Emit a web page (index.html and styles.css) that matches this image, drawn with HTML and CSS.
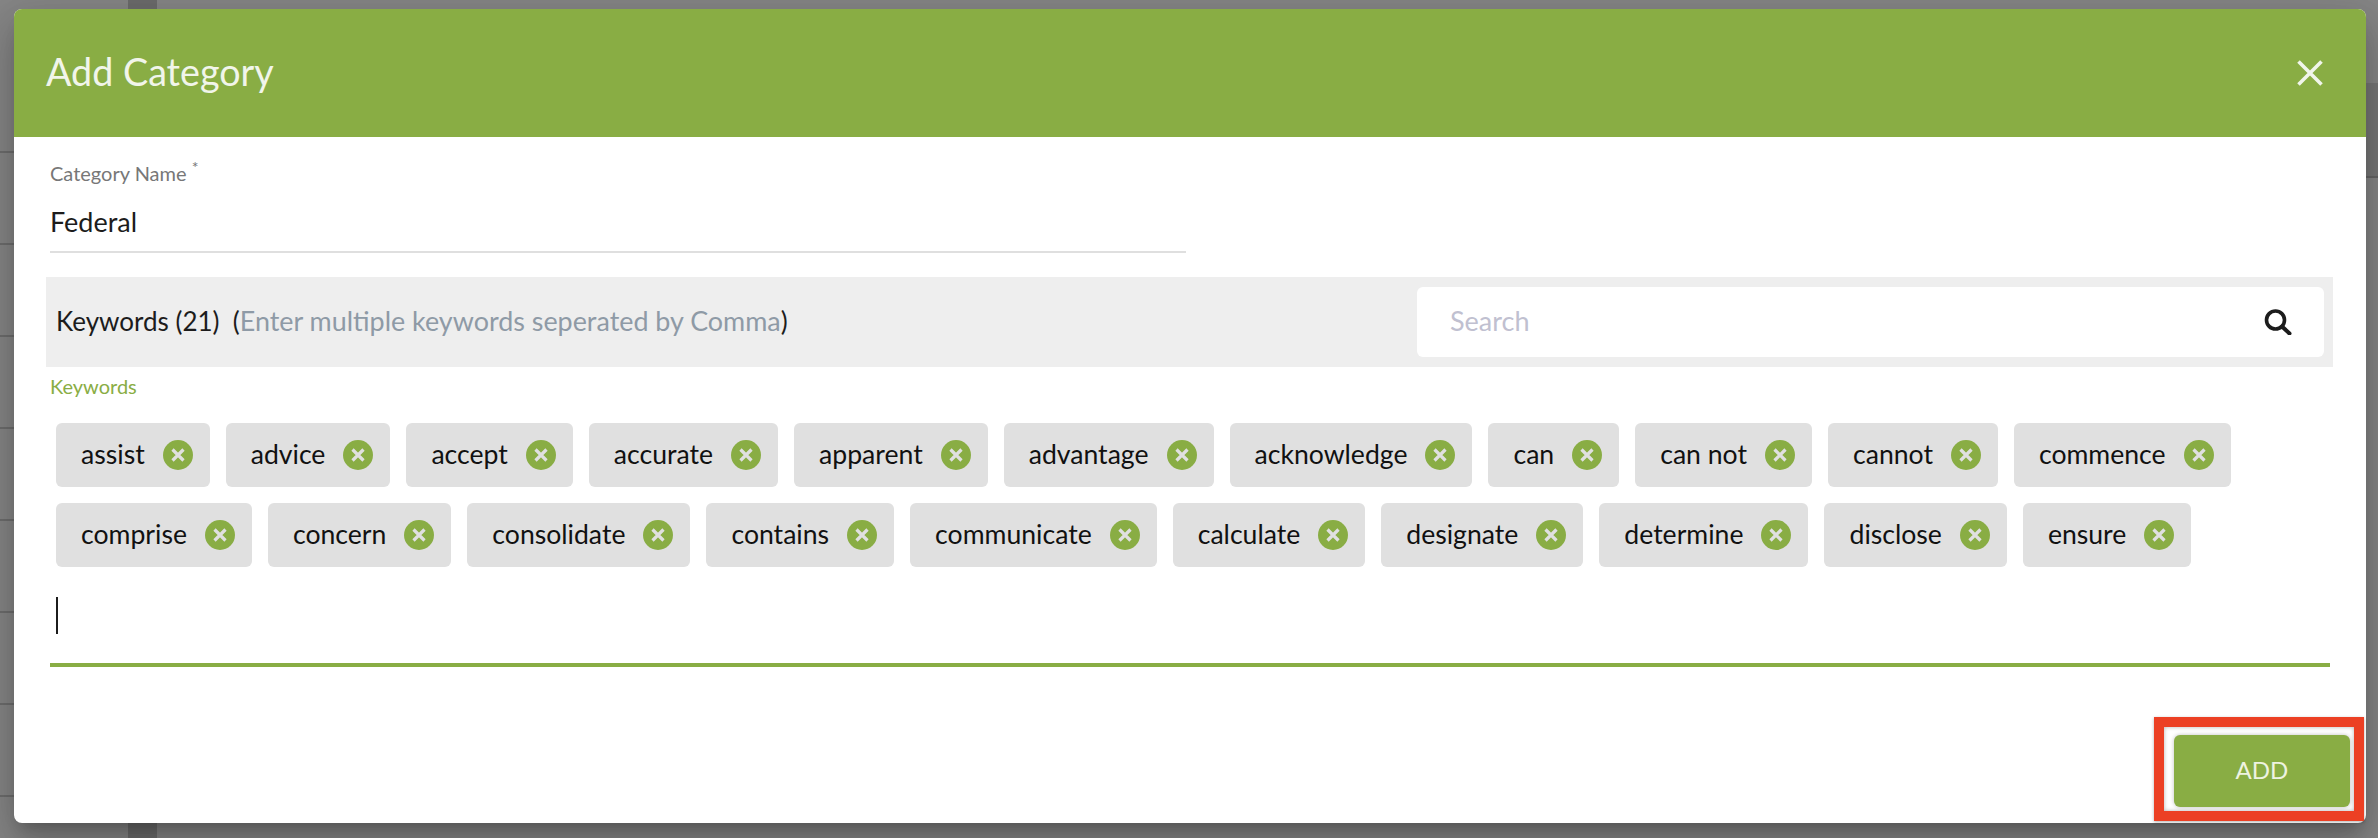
FILE: index.html
```html
<!doctype html>
<html lang="en">
<head>
    <meta charset="UTF-8">
    <meta content="width=device-width, initial-scale=1" name="viewport">
    <title>Add Category</title>
    <link rel="stylesheet" href="styles.css">
</head>
<body>
<div class="page">
    <div class="page-rows">
        <div class="page-row"></div>
        <div class="page-row"></div>
        <div class="page-row"></div>
        <div class="page-row"></div>
        <div class="page-row"></div>
        <div class="page-row"></div>
        <div class="page-row"></div>
        <div class="page-row"></div>
    </div>
    <div class="page-rail"></div>
    <div class="page-main">
        <div class="page-band"></div>
    </div>
</div>

<div class="modal">
    <div class="modal-header">
        <h2 class="modal-title">Add Category</h2>
        <svg class="modal-close" viewBox="0 0 28 28" width="28" height="28">
            <path d="M2.5 2.5L25.5 25.5M25.5 2.5L2.5 25.5" fill="none" stroke="#f1f5ea" stroke-width="3.6"/>
        </svg>
    </div>

    <div class="modal-body">
        <div class="field">
            <label class="field-label">Category Name <sup class="field-star">*</sup></label>
            <div class="field-value">Federal</div>
        </div>

        <div class="keyword-bar">
            <div class="keyword-title">Keywords (21) &nbsp;(<span class="keyword-hint">Enter multiple keywords seperated by Comma</span>)</div>
            <div class="search-box">
                <span class="search-placeholder">Search</span>
                <svg class="search-icon" viewBox="0 0 28 26" width="28" height="26">
                    <circle cx="11.5" cy="11" r="9" fill="none" stroke="#1c1c1c" stroke-width="3.6"/>
                    <path d="M18 17.5L25.5 24.5" fill="none" stroke="#1c1c1c" stroke-width="4" stroke-linecap="round"/>
                </svg>
            </div>
        </div>

        <div class="keywords-label">Keywords</div>

        <div class="chips">
            <div class="chip"><span>assist</span><svg class="chip-x" viewBox="0 0 30 30"><circle cx="15" cy="15" r="15"/><path d="M9.5 9.5L20.5 20.5M20.5 9.5L9.5 20.5"/></svg></div>
            <div class="chip"><span>advice</span><svg class="chip-x" viewBox="0 0 30 30"><circle cx="15" cy="15" r="15"/><path d="M9.5 9.5L20.5 20.5M20.5 9.5L9.5 20.5"/></svg></div>
            <div class="chip"><span>accept</span><svg class="chip-x" viewBox="0 0 30 30"><circle cx="15" cy="15" r="15"/><path d="M9.5 9.5L20.5 20.5M20.5 9.5L9.5 20.5"/></svg></div>
            <div class="chip"><span>accurate</span><svg class="chip-x" viewBox="0 0 30 30"><circle cx="15" cy="15" r="15"/><path d="M9.5 9.5L20.5 20.5M20.5 9.5L9.5 20.5"/></svg></div>
            <div class="chip"><span>apparent</span><svg class="chip-x" viewBox="0 0 30 30"><circle cx="15" cy="15" r="15"/><path d="M9.5 9.5L20.5 20.5M20.5 9.5L9.5 20.5"/></svg></div>
            <div class="chip"><span>advantage</span><svg class="chip-x" viewBox="0 0 30 30"><circle cx="15" cy="15" r="15"/><path d="M9.5 9.5L20.5 20.5M20.5 9.5L9.5 20.5"/></svg></div>
            <div class="chip"><span>acknowledge</span><svg class="chip-x" viewBox="0 0 30 30"><circle cx="15" cy="15" r="15"/><path d="M9.5 9.5L20.5 20.5M20.5 9.5L9.5 20.5"/></svg></div>
            <div class="chip"><span>can</span><svg class="chip-x" viewBox="0 0 30 30"><circle cx="15" cy="15" r="15"/><path d="M9.5 9.5L20.5 20.5M20.5 9.5L9.5 20.5"/></svg></div>
            <div class="chip"><span>can not</span><svg class="chip-x" viewBox="0 0 30 30"><circle cx="15" cy="15" r="15"/><path d="M9.5 9.5L20.5 20.5M20.5 9.5L9.5 20.5"/></svg></div>
            <div class="chip"><span>cannot</span><svg class="chip-x" viewBox="0 0 30 30"><circle cx="15" cy="15" r="15"/><path d="M9.5 9.5L20.5 20.5M20.5 9.5L9.5 20.5"/></svg></div>
            <div class="chip"><span>commence</span><svg class="chip-x" viewBox="0 0 30 30"><circle cx="15" cy="15" r="15"/><path d="M9.5 9.5L20.5 20.5M20.5 9.5L9.5 20.5"/></svg></div>
            <div class="chip"><span>comprise</span><svg class="chip-x" viewBox="0 0 30 30"><circle cx="15" cy="15" r="15"/><path d="M9.5 9.5L20.5 20.5M20.5 9.5L9.5 20.5"/></svg></div>
            <div class="chip"><span>concern</span><svg class="chip-x" viewBox="0 0 30 30"><circle cx="15" cy="15" r="15"/><path d="M9.5 9.5L20.5 20.5M20.5 9.5L9.5 20.5"/></svg></div>
            <div class="chip"><span>consolidate</span><svg class="chip-x" viewBox="0 0 30 30"><circle cx="15" cy="15" r="15"/><path d="M9.5 9.5L20.5 20.5M20.5 9.5L9.5 20.5"/></svg></div>
            <div class="chip"><span>contains</span><svg class="chip-x" viewBox="0 0 30 30"><circle cx="15" cy="15" r="15"/><path d="M9.5 9.5L20.5 20.5M20.5 9.5L9.5 20.5"/></svg></div>
            <div class="chip"><span>communicate</span><svg class="chip-x" viewBox="0 0 30 30"><circle cx="15" cy="15" r="15"/><path d="M9.5 9.5L20.5 20.5M20.5 9.5L9.5 20.5"/></svg></div>
            <div class="chip"><span>calculate</span><svg class="chip-x" viewBox="0 0 30 30"><circle cx="15" cy="15" r="15"/><path d="M9.5 9.5L20.5 20.5M20.5 9.5L9.5 20.5"/></svg></div>
            <div class="chip"><span>designate</span><svg class="chip-x" viewBox="0 0 30 30"><circle cx="15" cy="15" r="15"/><path d="M9.5 9.5L20.5 20.5M20.5 9.5L9.5 20.5"/></svg></div>
            <div class="chip"><span>determine</span><svg class="chip-x" viewBox="0 0 30 30"><circle cx="15" cy="15" r="15"/><path d="M9.5 9.5L20.5 20.5M20.5 9.5L9.5 20.5"/></svg></div>
            <div class="chip"><span>disclose</span><svg class="chip-x" viewBox="0 0 30 30"><circle cx="15" cy="15" r="15"/><path d="M9.5 9.5L20.5 20.5M20.5 9.5L9.5 20.5"/></svg></div>
            <div class="chip"><span>ensure</span><svg class="chip-x" viewBox="0 0 30 30"><circle cx="15" cy="15" r="15"/><path d="M9.5 9.5L20.5 20.5M20.5 9.5L9.5 20.5"/></svg></div>
        </div>

        <div class="chip-input">
            <div class="caret"></div>
        </div>
    </div>

    <div class="modal-footer">
        <div class="add-highlight">
            <button class="add-button">ADD</button>
        </div>
    </div>
</div>
</body>
</html>
```

FILE: styles.css
```css
html, body {
    margin: 0;
    height: 100%;
    overflow: hidden;
}

body {
    background: #868686;
    font-family: "Lato", "Open Sans", sans-serif;
    color: #1c1c1c;
}

/* dimmed page behind the modal */
.page {
    display: flex;
    height: 838px;
}

.page-rows {
    width: 128px;
    padding-top: 61px;
}

.page-row {
    height: 90px;
    border-bottom: 2px solid #6e6e6e;
}

.page-rail {
    width: 29px;
    background: #6c6c6c;
}

.page-main {
    flex: 1;
}

.page-band {
    margin-top: 83px;
    height: 93px;
    background: #777;
    border-bottom: 2px solid #666;
}

.modal {
    position: absolute;
    left: 14px;
    top: 9px;
    width: 2352px;
    height: 814px;
    background: #fff;
    border-radius: 8px;
    display: flex;
    flex-direction: column;
    box-shadow: 0 11px 15px -7px rgba(0, 0, 0, .2), 0 24px 38px 3px rgba(0, 0, 0, .14), 0 9px 46px 8px rgba(0, 0, 0, .12);
}

.modal-header {
    height: 128px;
    flex-shrink: 0;
    background: #89ad44;
    border-radius: 8px 8px 0 0;
    padding: 0 42px 0 32px;
    box-sizing: border-box;
    display: flex;
    align-items: center;
    justify-content: space-between;
}

.modal-title {
    margin: 0 0 4px;
    font-size: 37.7px;
    font-weight: 400;
    color: #f1f5ea;
}

.modal-close {
    display: block;
}

.modal-body {
    flex: 1;
    padding: 0 33px 0 32px;
}

.field {
    width: 1136px;
    margin-left: 4px;
    padding-top: 24px;
    border-bottom: 2px solid #dfdfdf;
    height: 90px;
}

.field-label {
    display: block;
    font-size: 20px;
    line-height: 24px;
    color: #777;
}

.field-star {
    font-size: 16px;
    line-height: 0;
}

.field-value {
    margin-top: 21px;
    font-size: 27px;
    line-height: 32px;
}

.keyword-bar {
    margin-top: 24px;
    height: 90px;
    box-sizing: border-box;
    padding: 10px 9px 10px 10px;
    background: #eee;
    display: flex;
    align-items: center;
    justify-content: space-between;
}

.keyword-title {
    font-size: 26px;
    margin-bottom: 4px;
}

.keyword-hint {
    font-size: 26.9px;
    color: #8e9aa6;
}

.search-box {
    width: 907px;
    height: 70px;
    box-sizing: border-box;
    padding: 0 32px 0 33px;
    background: #fff;
    border-radius: 6px;
    display: flex;
    align-items: center;
    justify-content: space-between;
}

.search-placeholder {
    font-size: 27px;
    color: #c0c0d0;
    margin-bottom: 4px;
}

.search-icon {
    display: block;
}

.keywords-label {
    margin: 7px 0 0 4px;
    font-size: 20px;
    line-height: 24px;
    color: #89ad44;
}

.chips {
    display: flex;
    flex-wrap: wrap;
    gap: 16px;
    margin: 25px 0 0 10px;
}

.chip {
    height: 64px;
    box-sizing: border-box;
    padding: 0 17px 0 25px;
    background: #e0e0e0;
    border-radius: 6px;
    display: flex;
    align-items: center;
    gap: 18px;
    font-size: 26.6px;
    color: #111;
}

.chip span {
    margin-bottom: 2px;
}

.chip-x {
    width: 30px;
    height: 30px;
    display: block;
}

.chip-x circle {
    fill: #89ad44;
}

.chip-x path {
    fill: none;
    stroke: #e0e0e0;
    stroke-width: 3.2;
}

.chip-input {
    margin-left: 4px;
    margin-right: 3px;
    height: 100px;
    box-sizing: border-box;
    padding: 30px 0 0 6px;
    border-bottom: 4px solid #89ad44;
}

.caret {
    width: 2px;
    height: 37px;
    background: #1c1c1c;
}

.modal-footer {
    display: flex;
    justify-content: flex-end;
    padding: 0 2px 2px 0;
}

/* red marker drawn around the button in the screenshot */
.add-highlight {
    border: 10px solid #ec4024;
    padding: 8px 4px 4px 10px;
    background: #fff;
    box-shadow: inset 0 0 4px rgba(0, 0, 0, .3), 0 1px 3px rgba(0, 0, 0, .3);
}

.add-button {
    display: block;
    width: 176px;
    height: 72px;
    padding: 0 0 3px;
    border: none;
    border-radius: 6px;
    background: #89ad44;
    color: #eef3e0;
    font-family: inherit;
    font-size: 24px;
    box-shadow: 0 0 4px rgba(0, 0, 0, .25);
}
```
